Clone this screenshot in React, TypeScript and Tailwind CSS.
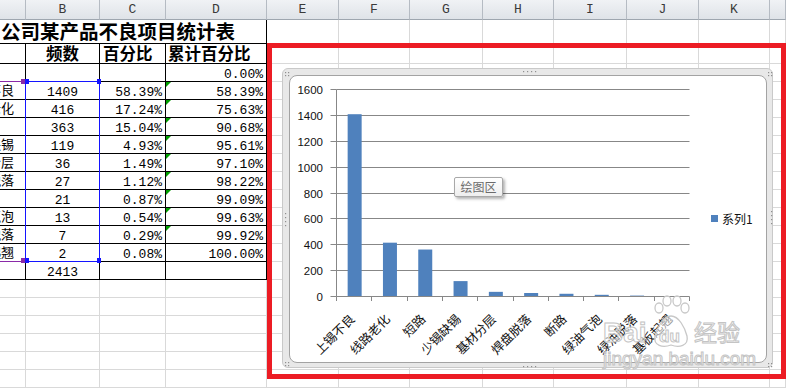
import React from "react";

const CJK = "font-['Noto_Sans_CJK_SC',sans-serif]";
const MONO = "font-['Liberation_Mono',monospace]";

const rows = [
  ["上锡不良", "1409", "58.39%", "58.39%"],
  ["线路老化", "416", "17.24%", "75.63%"],
  ["短路", "363", "15.04%", "90.68%"],
  ["少锡缺锡", "119", "4.93%", "95.61%"],
  ["基材分层", "36", "1.49%", "97.10%"],
  ["焊盘脱落", "27", "1.12%", "98.22%"],
  ["断路", "21", "0.87%", "99.09%"],
  ["绿油气泡", "13", "0.54%", "99.63%"],
  ["绿油脱落", "7", "0.29%", "99.92%"],
  ["基板起翘", "2", "0.08%", "100.00%"],
];

const values = [1409, 416, 363, 119, 36, 27, 21, 13, 7, 2];
const labels = ["上锡不良", "线路老化", "短路", "少锡缺锡", "基材分层", "焊盘脱落", "断路", "绿油气泡", "绿油脱落", "基板起翘"];

const normal = "border-r border-b border-[#d9d9d9]";
const black = "border-r border-b border-black";

function Chart() {
  const X0 = 47.5;
  const X1 = 400.5;
  const Y0 = 221;
  const K = 207 / 1600;
  const cw = (X1 - X0) / 10;
  const grid = [200, 400, 600, 800, 1000, 1200, 1400, 1600];
  const ticksY = [0, ...grid];
  return (
    <svg width="478" height="288" className="absolute left-[-1px] top-[-1px]">
      {grid.map((v) => {
        const y = Math.round(Y0 - v * K) + 0.5;
        return <line key={v} x1={X0} x2={X1} y1={y} y2={y} stroke="#878787" strokeWidth="1" />;
      })}
      <line x1={X0} x2={X0} y1={Math.round(Y0 - 1600 * K) + 0.5} y2={Y0 + 0.5} stroke="#878787" />
      {ticksY.map((v) => {
        const y = Math.round(Y0 - v * K) + 0.5;
        return <line key={"t" + v} x1={X0 - 6} x2={X0} y1={y} y2={y} stroke="#878787" />;
      })}
      {ticksY.map((v) => {
        const y = Math.round(Y0 - v * K) + 0.5;
        return (
          <text key={"l" + v} x={34} y={y + 4.2} textAnchor="end" fontSize="11.5" fill="#111" fontFamily="Liberation Sans, Arial, sans-serif">
            {v}
          </text>
        );
      })}
      {values.map((v, i) => {
        const h = v * K;
        return <rect key={"b" + i} x={X0 + cw * i + (cw - 14) / 2 + 0.5} y={Y0 + 0.5 - h} width={14} height={h} fill="#4f81bd" />;
      })}
      <line x1={X0} x2={X1} y1={Y0 + 0.5} y2={Y0 + 0.5} stroke="#878787" />
      {Array.from({ length: 11 }).map((_, i) => {
        const x = Math.round(X0 + cw * i - 0.5) + 0.5;
        return <line key={"xt" + i} x1={x} x2={x} y1={Y0 + 0.5} y2={Y0 + 5} stroke="#878787" />;
      })}
      {labels.map((l, i) => {
        const cx = X0 + cw * (i + 0.5) + 1.5;
        return (
          <text key={"xl" + i} transform={`translate(${cx},245) rotate(-45)`} textAnchor="end" fontSize="12.5" fill="#111" fontFamily="Noto Sans CJK SC, sans-serif">
            {l}
          </text>
        );
      })}
      <rect x={422} y={140} width={7} height={7} fill="#4f81bd" />
      <text x={433} y={148.5} fontSize="12" fill="#111" fontFamily="Noto Sans CJK SC, sans-serif">
        系列1
      </text>
    </svg>
  );
}

function FrameDots() {
  const dots: [number, number][] = [];
  const pair = (x: number, y: number) => {
    dots.push([x, y], [x + 3, y], [x, y + 3], [x + 3, y + 3]);
  };
  pair(2, 3);
  pair(485, 3);
  pair(2, 293);
  pair(485, 294);
  [240, 244, 248, 252].forEach((x) => dots.push([x, 2]));
  [240, 244, 248, 252].forEach((x) => dots.push([x, 297]));
  [144, 148, 152, 156].forEach((y) => dots.push([2, y]));
  [142, 146, 150, 154].forEach((y) => dots.push([488, y]));
  return (
    <svg width="491" height="300" className="absolute left-0 top-0 pointer-events-none">
      {dots.map(([x, y], i) => (
        <rect key={i} x={x} y={y} width={1.2} height={1.2} fill="#8f8f8f" />
      ))}
    </svg>
  );
}

export default function App() {
  const headers = ["", "B", "C", "D", "E", "F", "G", "H", "I", "J", "K", ""];
  const cells: React.ReactNode[] = [];

  headers.forEach((h, i) =>
    cells.push(
      <div
        key={"h" + i}
        className={`flex items-center justify-center border-r border-b border-r-[#b5bbc3] border-b-[#9ea6af] bg-gradient-to-b from-[#f0f2f5] to-[#dfe3e8] text-[13px] text-[#3a3a3a] ${MONO}`}
      >
        {h}
      </div>
    )
  );

  cells.push(
    <div key="title" className={`col-span-4 ${black} flex items-start pt-[1px] pl-[1px] whitespace-nowrap text-[19.5px] leading-[20px] font-bold text-black ${CJK}`}>
      公司某产品不良项目统计表
    </div>
  );
  for (let c = 0; c < 8; c++) cells.push(<div key={"r1" + c} className={normal} />);

  cells.push(<div key="r2a" className={black} />);
  cells.push(
    <div key="r2b" className={`${black} flex items-start justify-center pt-[1px] text-[16.5px] leading-[17px] font-bold ${CJK}`}>
      频数
    </div>
  );
  cells.push(
    <div key="r2c" className={`${black} flex items-start pl-[3px] pt-[1px] text-[16.5px] leading-[17px] font-bold ${CJK}`}>
      百分比
    </div>
  );
  cells.push(
    <div key="r2d" className={`${black} flex items-start pl-[2px] pt-[1px] whitespace-nowrap text-[16.5px] leading-[17px] font-bold ${CJK}`}>
      累计百分比
    </div>
  );
  for (let c = 0; c < 8; c++) cells.push(<div key={"r2n" + c} className={normal} />);

  cells.push(<div key="r3a" className={black} />);
  cells.push(<div key="r3b" className={black} />);
  cells.push(<div key="r3c" className={black} />);
  cells.push(
    <div key="r3d" className={`${black} flex items-start justify-end pr-[3px] pt-[4px] text-[13px] leading-[14px] ${MONO}`}>
      0.00%
    </div>
  );
  for (let c = 0; c < 8; c++) cells.push(<div key={"r3n" + c} className={normal} />);

  rows.forEach((r, ri) => {
    cells.push(
      <div key={"da" + ri} className={`${black} overflow-hidden flex items-start pt-[1px]`}>
        <span className={`ml-[-38px] whitespace-nowrap text-[13px] leading-[14px] ${CJK}`}>{r[0]}</span>
      </div>
    );
    cells.push(
      <div key={"db" + ri} className={`${black} flex items-start justify-center pt-[4px] text-[13px] leading-[14px] ${MONO}`}>
        {r[1]}
      </div>
    );
    cells.push(
      <div key={"dc" + ri} className={`${black} flex items-start justify-end pr-[3px] pt-[4px] text-[13px] leading-[14px] ${MONO}`}>
        {r[2]}
      </div>
    );
    cells.push(
      <div key={"dd" + ri} className={`${black} relative flex items-start justify-end pr-[3px] pt-[4px] text-[13px] leading-[14px] ${MONO}`}>
        {ri < 9 && <span className="absolute left-0 top-0 w-0 h-0 border-t-[5px] border-t-[#00a000] border-r-[5px] border-r-transparent" />}
        {r[3]}
      </div>
    );
    for (let c = 0; c < 8; c++) cells.push(<div key={"dn" + ri + "-" + c} className={normal} />);
  });

  cells.push(<div key="ta" className={black} />);
  cells.push(
    <div key="tb" className={`${black} flex items-start justify-center pt-[4px] text-[13px] leading-[14px] ${MONO}`}>
      2413
    </div>
  );
  cells.push(<div key="tc" className={black} />);
  cells.push(<div key="td" className={black} />);
  for (let c = 0; c < 8; c++) cells.push(<div key={"tn" + c} className={normal} />);

  for (let r = 0; r < 7; r++) for (let c = 0; c < 12; c++) cells.push(<div key={"e" + r + "-" + c} className={normal} />);

  return (
    <div className="relative w-[786px] h-[388px] overflow-hidden bg-white text-black">
      <div className="grid grid-cols-[26px_74px_66px_101px_72px_71px_73px_71px_73px_72px_71px_1fr] grid-rows-[20px_24px_20px_repeat(19,18px)]">
        {cells}
      </div>

      {/* selection ranges */}
      <div className="absolute left-[25px] top-[81px] w-[75px] h-[181px] border border-[#1414ff]" />
      <div className="absolute left-0 top-[81px] w-[22px] h-px bg-[#8a2aa8]" />
      <div className="absolute left-0 top-[261px] w-[22px] h-px bg-[#8a2aa8]" />
      <div className="absolute left-[21px] top-[79px] w-[4px] h-[5px] bg-[#8a2aa8]" />
      <div className="absolute left-[25px] top-[79px] w-[4px] h-[5px] bg-[#1414ff]" />
      <div className="absolute left-[97px] top-[79px] w-[4px] h-[5px] bg-[#1414ff]" />
      <div className="absolute left-[21px] top-[258px] w-[4px] h-[5px] bg-[#8a2aa8]" />
      <div className="absolute left-[25px] top-[258px] w-[4px] h-[5px] bg-[#1414ff]" />
      <div className="absolute left-[97px] top-[258px] w-[4px] h-[5px] bg-[#1414ff]" />

      {/* chart object */}
      <div className="absolute left-[282px] top-[68px] w-[491px] h-[300px] rounded-[6px] border border-[#c9c9c9] bg-[#e8e8e8] pl-[6px] pt-[6px]">
        <div className="relative w-[478px] h-[288px] rounded-[8px] border border-[#a3a3a3] bg-white">
          <Chart />
          <div className={`absolute left-[164px] top-[101px] w-[49px] h-[20px] flex items-center justify-center rounded-[2px] border border-[#a8a8a8] bg-gradient-to-b from-white to-[#eeeeee] shadow-[2px_2px_3px_rgba(0,0,0,0.3)] text-[12px] leading-[14px] text-[#6b6b6b] ${CJK}`}>
            绘图区
          </div>
        </div>
        <FrameDots />
      </div>

      {/* red highlight */}
      <div className="absolute left-[267px] top-[43px] w-[519px] h-[336px] border-[5px] border-[#ec1c24]" />

      {/* watermark */}
      <div className="absolute left-[603px] top-[318px] text-[28px] leading-[30px] font-bold text-[rgba(255,255,255,0.55)] [-webkit-text-stroke:1px_#c4c4c4] font-['Liberation_Sans',sans-serif]">
        Bai
      </div>
      <svg width="40" height="56" className="absolute left-[651px] top-[294px] pointer-events-none">
        <g fill="rgba(255,255,255,0.55)" stroke="#c8c8c8" strokeWidth="1.3">
          <ellipse cx="8" cy="14" rx="4" ry="5" />
          <ellipse cx="16" cy="7" rx="4" ry="5" />
          <ellipse cx="26" cy="7" rx="4" ry="5" />
          <ellipse cx="34" cy="14" rx="4" ry="5" />
          <path d="M20 22 C12 22 6 34 4 42 C2 52 12 54 20 51 C28 54 38 52 36 42 C34 34 28 22 20 22 Z" />
        </g>
      </svg>
      <div className="absolute left-[659px] top-[328px] text-[17px] leading-[18px] font-bold text-[rgba(255,255,255,0.55)] [-webkit-text-stroke:1px_#c4c4c4] font-['Liberation_Sans',sans-serif]">
        du
      </div>
      <div className={`absolute left-[694px] top-[316px] text-[23px] leading-[30px] text-[rgba(255,255,255,0.55)] [-webkit-text-stroke:1px_#c4c4c4] ${CJK}`}>
        经验
      </div>
      <div className="absolute left-[603px] top-[349px] text-[19px] leading-[20px] text-[rgba(255,255,255,0.55)] [-webkit-text-stroke:1px_#c4c4c4] font-['Liberation_Sans',sans-serif]">
        jingyan.baidu.com
      </div>
    </div>
  );
}
